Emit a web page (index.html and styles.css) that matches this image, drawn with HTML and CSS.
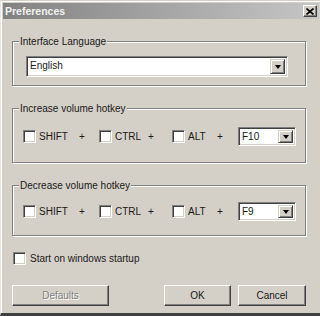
FILE: index.html
```html
<!DOCTYPE html>
<html lang="en">
<head>
    <meta charset="UTF-8">
    <title>Preferences</title>
    <link rel="stylesheet" href="styles.css">
</head>
<body>
<div class="window">
    <div class="titlebar">
        <span class="title">Preferences</span>
        <a href="javascript:;" class="close">
            <svg width="8" height="7" viewBox="0 0 8 7">
                <path d="M0.5 0.5 L7.5 6.5 M7.5 0.5 L0.5 6.5" stroke="#000" stroke-width="1.6" fill="none"/>
            </svg>
        </a>
    </div>

    <div class="content">
        <fieldset class="group">
            <legend>Interface Language</legend>
            <div class="group-body lang">
                <div class="combo wide">
                    <span class="combo-text">English</span>
                    <span class="combo-btn"><i class="arrow"></i></span>
                </div>
            </div>
        </fieldset>

        <fieldset class="group">
            <legend>Increase volume hotkey</legend>
            <div class="group-body hotkey">
                <label class="check shift"><input type="checkbox">SHIFT</label>
                <span class="plus p1">+</span>
                <label class="check ctrl"><input type="checkbox">CTRL</label>
                <span class="plus p2">+</span>
                <label class="check alt"><input type="checkbox">ALT</label>
                <span class="plus p3">+</span>
                <div class="combo key">
                    <span class="combo-text">F10</span>
                    <span class="combo-btn"><i class="arrow"></i></span>
                </div>
            </div>
        </fieldset>

        <fieldset class="group last">
            <legend>Decrease volume hotkey</legend>
            <div class="group-body hotkey">
                <label class="check shift"><input type="checkbox">SHIFT</label>
                <span class="plus p1">+</span>
                <label class="check ctrl"><input type="checkbox">CTRL</label>
                <span class="plus p2">+</span>
                <label class="check alt"><input type="checkbox">ALT</label>
                <span class="plus p3">+</span>
                <div class="combo key">
                    <span class="combo-text">F9</span>
                    <span class="combo-btn"><i class="arrow"></i></span>
                </div>
            </div>
        </fieldset>

        <label class="check startup"><input type="checkbox">Start on windows startup</label>

        <div class="buttons">
            <button class="btn defaults" disabled>Defaults</button>
            <button class="btn ok">OK</button>
            <button class="btn cancel">Cancel</button>
        </div>
    </div>
</div>
</body>
</html>
```

FILE: styles.css
```css
*{
    margin: 0;
    padding: 0;
    box-sizing: border-box;
}
body{
    background: #d4d0c8;
    font-family: "Liberation Sans", Arial, sans-serif;
    font-size: 10px;
    color: #1a1a1a;
}
.window{
    width: 320px;
    height: 316px;
    background: #d4d0c8;
    border-left: 1px solid #e8e6e0;
    border-top: 1px solid #d4d0c8;
    border-bottom: 3px solid #404040;
    box-shadow: inset 1px 1px 0 #fff;
    padding: 2px 0 0 2px;
}

/* title bar */
.titlebar{
    height: 16px;
    margin-right: 1px;
    display: flex;
    align-items: center;
    justify-content: space-between;
    padding: 0 2px 0 2px;
    background: linear-gradient(to right, #828282, #c6c6c6);
}
.titlebar .title{
    color: #f2f2f2;
    font-weight: bold;
    font-size: 10.5px;
    line-height: 16px;
}
.titlebar .close{
    width: 14px;
    height: 12px;
    display: flex;
    align-items: center;
    justify-content: center;
    background: #d4d0c8;
    border: 1px solid;
    border-color: #fff #404040 #404040 #fff;
    box-shadow: inset -1px -1px 0 #808080;
}

.content{
    padding: 0 14px 0 9px;
}

/* group frames */
.group{
    margin-top: 16px;
    border: 1px solid #808080;
    box-shadow: 1px 1px 0 #fff, inset 1px 1px 0 #fff;
    min-width: 0;
}
.group legend{
    margin-left: 6px;
    padding: 0 1px;
    line-height: 13px;
    background: #d4d0c8;
}
.group-body{
    display: flex;
    align-items: center;
}
.group-body.lang{
    padding: 8px 16px 8px 13px;
}
.group-body.hotkey{
    padding: 12px 0 16px 10px;
}
.group.last .group-body.hotkey{
    padding: 10px 0 14px 10px;
}

/* combo box */
.combo{
    display: flex;
    background: #fff;
    border: 1px solid;
    border-color: #808080 #fff #fff #808080;
    box-shadow: inset 1px 1px 0 #404040, inset -1px -1px 0 #d4d0c8;
    padding: 2px;
}
.combo.wide{
    width: 262px;
    height: 21px;
}
.combo.key{
    width: 58px;
    height: 19px;
}
.combo-text{
    flex: 1;
    line-height: 13px;
    padding-left: 1px;
}
.combo-btn{
    width: 15px;
    display: flex;
    align-items: center;
    justify-content: center;
    background: #d4d0c8;
    border: 1px solid;
    border-color: #d4d0c8 #404040 #404040 #d4d0c8;
    box-shadow: inset 1px 1px 0 #fff, inset -1px -1px 0 #808080;
}
.combo-btn .arrow{
    width: 0;
    height: 0;
    border-left: 3.5px solid transparent;
    border-right: 3.5px solid transparent;
    border-top: 4px solid #000;
}

/* checkboxes */
.check{
    display: flex;
    align-items: center;
    gap: 3px;
    line-height: 13px;
}
.check input{
    appearance: none;
    width: 13px;
    height: 13px;
    background: #fff;
    border: 1px solid;
    border-color: #808080 #fff #fff #808080;
    box-shadow: inset 1px 1px 0 #404040, inset -1px -1px 0 #d4d0c8;
}
.check.shift{ width: 52px; }
.check.ctrl{ width: 45px; }
.check.alt{ width: 41px; }
.plus{
    width: 14px;
    text-align: center;
}
.plus.p1{ margin-right: 10px; }
.plus.p2{ margin-right: 14px; }
.plus.p3{ margin-right: 11px; }

.check.startup{
    margin: 16px 0 0 1px;
    gap: 4px;
}

/* buttons */
.buttons{
    display: flex;
    gap: 7px;
    margin-top: 20px;
}
.btn{
    height: 21px;
    font: inherit;
    color: #1a1a1a;
    background: #d4d0c8;
    border: 1px solid;
    border-color: #fff #404040 #404040 #fff;
    box-shadow: inset -1px -1px 0 #808080;
}
.btn.defaults{
    width: 97px;
    margin-right: auto;
    color: #808080;
    text-shadow: 1px 1px 0 #fff;
}
.btn.ok{ width: 67px; }
.btn.cancel{ width: 68px; }
```
